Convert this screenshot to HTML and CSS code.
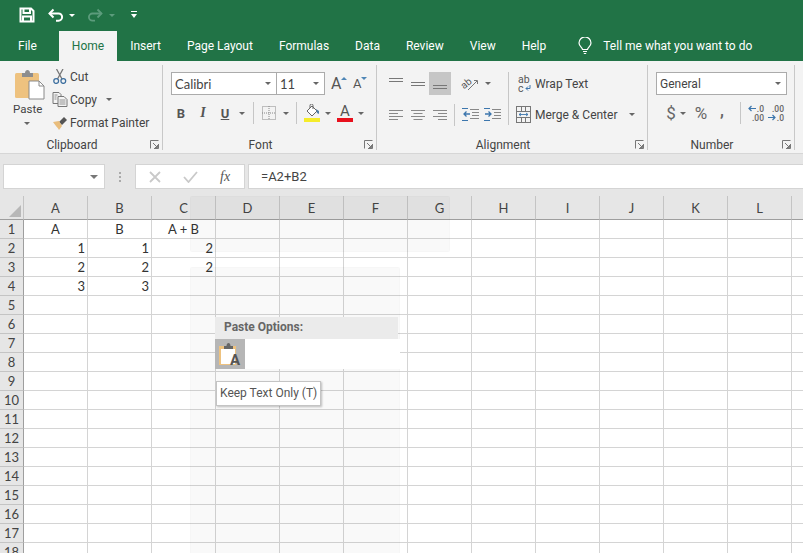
FILE: index.html
```html
<!DOCTYPE html>
<html lang="en">
<head>
<meta charset="utf-8">
<title>Excel</title>
<link rel="stylesheet" href="styles.css">
</head>
<body>
<header class="titlebar">
  <svg class="qa qa-save" width="16" height="16" viewBox="0 0 16 16" fill="none" stroke="#fff" stroke-width="2"><path d="M1.500 1.500h10.500l2.500 2.500v10.500h-13z"/><path d="M4.500 2v4h6.500V2M4 14.500V9.500h8v5"/></svg>
  <svg class="qa qa-undo" width="16" height="14" viewBox="0 0 16 14" fill="none" stroke="#fff" stroke-width="2"><path d="M1.500 5.500h9a3.600 3.600 0 0 1 0 7.200H8"/><path d="M5.500 1.500L1.500 5.500l4 4"/></svg>
  <span class="caret caret-white qa-c1"></span>
  <svg class="qa qa-redo" width="16" height="14" viewBox="0 0 16 14" fill="none" stroke="#5c9c7c" stroke-width="1.800"><path d="M14.500 5.500h-9a3.600 3.600 0 0 0 0 7.200H8"/><path d="M10.500 1.500l4 4-4 4"/></svg>
  <span class="caret caret-dim qa-c2"></span>
  <svg class="qa qa-more" width="8" height="8" viewBox="0 0 8 8" fill="#fff"><rect x="1" y="0" width="6" height="1"/><path d="M1 3h6L4 7z"/></svg>
</header>

<nav class="tabs">
  <span class="tab tab-file">File</span>
  <span class="tab tab-active">Home</span>
  <span class="tab">Insert</span>
  <span class="tab">Page Layout</span>
  <span class="tab">Formulas</span>
  <span class="tab">Data</span>
  <span class="tab">Review</span>
  <span class="tab">View</span>
  <span class="tab">Help</span>
  <svg class="bulb" width="14" height="18" viewBox="0 0 14 18" fill="none" stroke="#fff" stroke-width="1.200"><path d="M4.500 12.500c0-2-3.500-3.200-3.500-6.500a6 6 0 0 1 12 0c0 3.300-3.500 4.500-3.500 6.500z"/><path d="M5 14.500h4M5.800 16.500h2.400"/></svg>
  <span class="tell">Tell me what you want to do</span>
</nav>

<section class="ribbon">
  <div class="group g-clip">
    <div class="group-body clip-body">
      <div class="paste">
        <svg width="30" height="31" viewBox="0 0 30 31"><rect x="0" y="4" width="24" height="25" rx="1.500" fill="#eec27f"/><path d="M7 4h3c0-4 5-4 5 0h3v4H7z" fill="#8d8d8d"/><path d="M14 12h10l5 5v13H14z" fill="#fff" stroke="#8a8a8a"/><path d="M24 12v5h5" fill="none" stroke="#8a8a8a"/></svg>
        <span class="paste-label">Paste</span>
        <span class="caret"></span>
      </div>
      <div class="clip-list">
        <div class="clip-row">
          <svg class="clip-icon" width="15" height="15" viewBox="0 0 15 15" fill="none"><path d="M4 0l5.500 10M10.500 0L5 10" stroke="#777" stroke-width="1.300"/><circle cx="3.700" cy="12" r="2.400" stroke="#3d6f9f" stroke-width="1.300"/><circle cx="10.800" cy="12" r="2.400" stroke="#3d6f9f" stroke-width="1.300"/></svg>
          <span>Cut</span>
        </div>
        <div class="clip-row">
          <svg class="clip-icon" width="15" height="15" viewBox="0 0 15 15" fill="#f3f3f3" stroke="#777"><path d="M.5.500h6l2 2v9h-8z"/><path d="M5.500 4.500h6l3 3v7h-9z"/><path d="M7 8h6M7 10h6M7 12h6M2 3h3M2 5h2M2 7h2" stroke-width=".8"/></svg>
          <span>Copy</span>
          <span class="caret copy-caret"></span>
        </div>
        <div class="clip-row">
          <svg class="clip-icon" width="16" height="15" viewBox="0 0 16 15"><path d="M7 7L12 2l3 3-5 5z" fill="#555"/><path d="M1 7l6-1 3 5-3 4c-1-2-4-5-6-8z" fill="#e9bd7c"/></svg>
          <span>Format Painter</span>
        </div>
      </div>
    </div>
    <div class="group-foot"><span class="foot-label">Clipboard</span><svg class="launch" width="9" height="9" viewBox="0 0 9 9" fill="none" stroke="#777"><path d="M.5 8.500v-8h8M8.500 4v4.500H4M3 3l4.500 4.500M5 7.500h2.500V5"/></svg></div>
  </div>

  <div class="group g-font">
    <div class="group-body font-body">
      <div class="row-top">
        <div class="select font-name"><span>Calibri</span><span class="caret"></span></div>
        <div class="select font-size"><span>11</span><span class="caret"></span></div>
        <span class="size-btn size-grow"><span class="a-big">A</span><svg width="6" height="3" viewBox="0 0 6 3"><path d="M0 3l3-3 3 3z" fill="#4f86b6"/></svg></span>
        <span class="size-btn size-shrink"><span class="a-small">A</span><svg width="6" height="3" viewBox="0 0 6 3"><path d="M0 0h6L3 3z" fill="#4f86b6"/></svg></span>
      </div>
      <div class="row-bottom">
        <span class="fmt fmt-b">B</span>
        <span class="fmt fmt-i">I</span>
        <span class="fmt fmt-u">U</span>
        <span class="caret-box"><span class="caret"></span></span>
        <span class="sep sep-f1"></span>
        <svg class="border-ic" width="14" height="14" viewBox="0 0 14 14" fill="none" stroke="#888" stroke-dasharray="1 1"><rect x=".5" y=".5" width="13" height="13"/><path d="M7 0v14M0 7h14"/></svg>
        <span class="caret-box cb-border"><span class="caret"></span></span>
        <span class="sep sep-f2"></span>
        <svg class="fill-ic" width="17" height="18" viewBox="0 0 17 18"><path d="M8 2l5 5-5 5-5-5z" fill="#fff" stroke="#666"/><path d="M6 4V1.500a1.500 1.500 0 0 1 3 0V5" fill="none" stroke="#666"/><path d="M12 5l3 2v3l-2-1z" fill="#4f7fa8"/><rect y="14" width="16" height="4" fill="#f5ec2a"/></svg>
        <span class="caret-box cb-fill"><span class="caret"></span></span>
        <span class="color-ic"><span class="color-a">A</span><span class="color-bar"></span></span>
        <span class="caret-box cb-color"><span class="caret"></span></span>
      </div>
    </div>
    <div class="group-foot"><span class="foot-label">Font</span><svg class="launch" width="9" height="9" viewBox="0 0 9 9" fill="none" stroke="#777"><path d="M.5 8.500v-8h8M8.500 4v4.500H4M3 3l4.500 4.500M5 7.500h2.500V5"/></svg></div>
  </div>

  <div class="group g-align">
    <div class="group-body align-body">
      <div class="align-left">
        <div class="align-row">
          <span class="ab"><svg width="16" height="14" viewBox="0 0 16 14" stroke="#777"><path d="M1 1.500h14M1 4.500h14"/></svg></span>
          <span class="ab"><svg width="16" height="14" viewBox="0 0 16 14" stroke="#777"><path d="M1 5.500h14M1 8.500h14"/></svg></span>
          <span class="ab ab-on"><svg width="16" height="14" viewBox="0 0 16 14" stroke="#777"><path d="M1 8.500h14M1 11.500h14"/></svg></span>
          <span class="ab orient"><span class="orient-ab">ab</span><svg class="orient-arrow" width="12" height="12" viewBox="0 0 12 12"><path d="M1 11L10 2M7 1.500h3.500V5" fill="none" stroke="#777"/></svg></span>
          <span class="caret-box"><span class="caret"></span></span>
        </div>
        <div class="align-row">
          <span class="ab"><svg width="16" height="12" viewBox="0 0 16 12" stroke="#888"><path d="M1 1.500h14M1 4.500h9M1 7.500h14M1 10.500h9"/></svg></span>
          <span class="ab"><svg width="16" height="12" viewBox="0 0 16 12" stroke="#888"><path d="M1 1.500h14M3.500 4.500h9M1 7.500h14M3.500 10.500h9"/></svg></span>
          <span class="ab"><svg width="16" height="12" viewBox="0 0 16 12" stroke="#888"><path d="M1 1.500h14M6 4.500h9M1 7.500h14M6 10.500h9"/></svg></span>
          <span class="sep sep-a"></span>
          <span class="ab"><svg width="17" height="13" viewBox="0 0 17 13" fill="none"><path d="M8 1.500h9M10 4.500h7M10 7.500h7M8 10.500h9" stroke="#888"/><path d="M8 6H2M4.500 3.500L2 6l2.500 2.500" stroke="#3c76ad" stroke-width="1.300"/><path d="M0 .5h6M0 12.500h6" stroke="#3c76ad"/></svg></span>
          <span class="ab"><svg width="17" height="13" viewBox="0 0 17 13" fill="none"><path d="M8 1.500h9M10 4.500h7M10 7.500h7M8 10.500h9" stroke="#888"/><path d="M1 6h6M4.500 3.500L7 6 4.500 8.500" stroke="#3c76ad" stroke-width="1.300"/><path d="M0 .5h6M0 12.500h6" stroke="#3c76ad"/></svg></span>
        </div>
      </div>
      <div class="align-right">
        <div class="wrap-row">
          <span class="wrap-ic"><span class="wrap-ab">ab</span><span class="wrap-c">c<svg width="6" height="6" viewBox="0 0 6 6" fill="none" stroke="#3c76ad"><path d="M5 0v3.500H1M3 1.500L1 3.500l2 2"/></svg></span></span>
          <span>Wrap Text</span>
        </div>
        <div class="merge-row">
          <svg width="15" height="17" viewBox="0 0 15 17" fill="none" stroke="#777"><rect x=".5" y=".5" width="14" height="16"/><path d="M0 5.500h15M0 11.500h15M5.500 0v5.500M9.500 0v5.500M5.500 11.500v5.500M9.500 11.500v5.500"/><path d="M3 8.500h9M5 7l-2 1.500L5 10M10 7l2 1.500L10 10" stroke="#3c76ad" stroke-width=".9"/></svg>
          <span>Merge &amp; Center</span>
          <span class="caret merge-caret"></span>
        </div>
      </div>
    </div>
    <div class="group-foot"><span class="foot-label">Alignment</span><svg class="launch" width="9" height="9" viewBox="0 0 9 9" fill="none" stroke="#777"><path d="M.5 8.500v-8h8M8.500 4v4.500H4M3 3l4.500 4.500M5 7.500h2.500V5"/></svg></div>
  </div>

  <div class="group g-num">
    <div class="group-body num-body">
      <div class="select num-select"><span>General</span><span class="caret"></span></div>
      <div class="num-row">
        <span class="num-sym num-dollar">$</span>
        <span class="caret-box"><span class="caret"></span></span>
        <span class="num-sym num-pct">%</span>
        <span class="num-sym num-comma">,</span>
        <span class="sep sep-n"></span>
        <span class="dec"><span class="dec-line"><svg class="arr" width="8" height="7" viewBox="0 0 8 7" fill="none" stroke="#3c76ad" stroke-width="1.200"><path d="M8 3.500H1M3.500 1L1 3.500 3.500 6"/></svg>.0</span><span class="dec-line">.00</span></span>
        <span class="dec"><span class="dec-line">.00</span><span class="dec-line"><svg class="arr" width="8" height="7" viewBox="0 0 8 7" fill="none" stroke="#3c76ad" stroke-width="1.200"><path d="M0 3.500h7M4.500 1L7 3.500 4.500 6"/></svg>.0</span></span>
      </div>
    </div>
    <div class="group-foot"><span class="foot-label">Number</span><svg class="launch" width="9" height="9" viewBox="0 0 9 9" fill="none" stroke="#777"><path d="M.5 8.500v-8h8M8.500 4v4.500H4M3 3l4.500 4.500M5 7.500h2.500V5"/></svg></div>
  </div>
</section>

<section class="formula">
  <div class="namebox"><span class="caret"></span></div>
  <span class="dots"></span>
  <div class="fx-box">
    <svg width="14" height="12" viewBox="0 0 14 12" fill="none" stroke="#c9c9c9" stroke-width="1.800"><path d="M2 1l10 10M12 1L2 11"/></svg>
    <svg width="15" height="12" viewBox="0 0 15 12" fill="none" stroke="#c9c9c9" stroke-width="1.800"><path d="M1 6l4.500 5L14 1"/></svg>
    <span class="fx">fx</span>
  </div>
  <div class="fx-input">=A2+B2</div>
</section>

<section class="sheet">
  <table class="grid">
    <thead>
      <tr><th class="corner"><span class="corner-tri"></span></th><th>A</th><th>B</th><th>C</th><th>D</th><th>E</th><th>F</th><th>G</th><th>H</th><th>I</th><th>J</th><th>K</th><th>L</th><th></th></tr>
    </thead>
    <tbody>
      <tr><th>1</th><td class="c">A</td><td class="c">B</td><td class="c">A + B</td><td></td><td></td><td></td><td></td><td></td><td></td><td></td><td></td><td></td><td></td></tr>
      <tr><th>2</th><td>1</td><td>1</td><td>2</td><td></td><td></td><td></td><td></td><td></td><td></td><td></td><td></td><td></td><td></td></tr>
      <tr><th>3</th><td>2</td><td>2</td><td>2</td><td></td><td></td><td></td><td></td><td></td><td></td><td></td><td></td><td></td><td></td></tr>
      <tr><th>4</th><td>3</td><td>3</td><td></td><td></td><td></td><td></td><td></td><td></td><td></td><td></td><td></td><td></td><td></td></tr>
      <tr><th>5</th><td></td><td></td><td></td><td></td><td></td><td></td><td></td><td></td><td></td><td></td><td></td><td></td><td></td></tr>
      <tr><th>6</th><td></td><td></td><td></td><td></td><td></td><td></td><td></td><td></td><td></td><td></td><td></td><td></td><td></td></tr>
      <tr><th>7</th><td></td><td></td><td></td><td></td><td></td><td></td><td></td><td></td><td></td><td></td><td></td><td></td><td></td></tr>
      <tr><th>8</th><td></td><td></td><td></td><td></td><td></td><td></td><td></td><td></td><td></td><td></td><td></td><td></td><td></td></tr>
      <tr><th>9</th><td></td><td></td><td></td><td></td><td></td><td></td><td></td><td></td><td></td><td></td><td></td><td></td><td></td></tr>
      <tr><th>10</th><td></td><td></td><td></td><td></td><td></td><td></td><td></td><td></td><td></td><td></td><td></td><td></td><td></td></tr>
      <tr><th>11</th><td></td><td></td><td></td><td></td><td></td><td></td><td></td><td></td><td></td><td></td><td></td><td></td><td></td></tr>
      <tr><th>12</th><td></td><td></td><td></td><td></td><td></td><td></td><td></td><td></td><td></td><td></td><td></td><td></td><td></td></tr>
      <tr><th>13</th><td></td><td></td><td></td><td></td><td></td><td></td><td></td><td></td><td></td><td></td><td></td><td></td><td></td></tr>
      <tr><th>14</th><td></td><td></td><td></td><td></td><td></td><td></td><td></td><td></td><td></td><td></td><td></td><td></td><td></td></tr>
      <tr><th>15</th><td></td><td></td><td></td><td></td><td></td><td></td><td></td><td></td><td></td><td></td><td></td><td></td><td></td></tr>
      <tr><th>16</th><td></td><td></td><td></td><td></td><td></td><td></td><td></td><td></td><td></td><td></td><td></td><td></td><td></td></tr>
      <tr><th>17</th><td></td><td></td><td></td><td></td><td></td><td></td><td></td><td></td><td></td><td></td><td></td><td></td><td></td></tr>
      <tr><th>18</th><td></td><td></td><td></td><td></td><td></td><td></td><td></td><td></td><td></td><td></td><td></td><td></td><td></td></tr>
    </tbody>
  </table>
  <div class="ghost ghost-top"></div>
  <div class="ghost ghost-main"></div>
  <div class="paste-menu">
    <div class="menu-head">Paste Options:</div>
    <div class="menu-body">
      <span class="menu-btn">
        <svg width="18" height="24" viewBox="0 0 18 24"><rect x="0" y="4" width="17" height="19" fill="#eec27f"/><path d="M5 4h2.500c0-4 4-4 4 0H14v3H5z" fill="#666"/><rect x="2" y="7" width="14" height="15" fill="#fff"/></svg>
        <span class="menu-a">A</span>
      </span>
    </div>
  </div>
  <div class="tooltip">Keep Text Only (T)</div>
</section>
</body>
</html>
```
FILE: styles.css
```css
* { box-sizing: border-box; }
html, body { margin: 0; padding: 0; }
body {
  width: 803px; height: 553px; overflow: hidden;
  display: flex; flex-direction: column;
  background: #fff; color: #444;
  font: 12px Roboto, "Noto Sans", sans-serif;
}

/* title bar */
.titlebar { height: 31px; flex: none; background: #217346; display: flex; align-items: center; }
.qa { flex: none; }
.qa-save { margin: -2px 0 0 19px; }
.qa-undo { margin: -2px 0 0 13px; }
.qa-c1 { margin: 0 0 0 5px; }
.qa-redo { margin: -2px 0 0 12px; }
.qa-c2 { margin: 0 0 0 6px; }
.qa-more { margin: -1px 0 0 15px; }

.caret { display: inline-block; width: 0; height: 0; border: 3px solid transparent; border-top: 3px solid #666; border-bottom: 0; flex: none; }
.caret-white { border-top-color: #fff; }
.caret-dim { border-top-color: #5c9c7c; }
.caret-box { display: inline-flex; width: 12px; justify-content: center; align-items: center; flex: none; }

/* tabs */
.tabs { height: 30px; flex: none; background: #217346; color: #fff; display: flex; align-items: center; padding-left: 5px; }
.tab { padding: 0 13px; line-height: 30px; white-space: nowrap; }
.tab-file { padding-right: 22px; }
.tab-active { background: #f3f3f3; color: #217346; padding: 0 13px; }
.bulb { margin-left: 19px; flex: none; }
.tell { margin-left: 11px; white-space: nowrap; }

/* ribbon */
.ribbon { height: 93px; flex: none; background: #f3f3f3; border-bottom: 1px solid #d6d6d6; display: flex; padding: 4px 0 3px; }
.group { flex: none; display: flex; flex-direction: column; border-right: 1px solid #c8c8c8; }
.g-clip { width: 163px; }
.g-font { width: 214px; }
.g-align { width: 271px; }
.g-num { width: 147px; }
.group-body { flex: 1; min-height: 0; }
.group-foot { height: 18px; flex: none; margin-bottom: -3px; padding: 1px 3px 0 0; display: flex; align-items: center; }
.foot-label { flex: 1; text-align: center; padding-right: 6px; }
.launch { flex: none; }

/* clipboard */
.clip-body { display: flex; }
.paste { width: 52px; padding: 4px 0 0 15px; display: flex; flex-direction: column; }
.paste-label { margin: 1px 0 0 -2px; line-height: 17px; font-size: 11.500px; }
.paste .caret { margin: 4px 0 0 9px; }
.clip-list { display: flex; flex-direction: column; }
.clip-row { height: 23px; display: flex; align-items: center; white-space: nowrap; }
.clip-icon { width: 16px; margin-right: 2px; flex: none; }
.copy-caret { margin-left: 9px; }

/* font */
.font-body { padding-top: 7px; }
.row-top, .row-bottom, .align-row, .num-row { display: flex; align-items: center; }
.select { background: #fff; border: 1px solid #ababab; height: 23px; display: flex; align-items: center; justify-content: space-between; padding: 0 5px 0 3px; flex: none; }
.font-name { width: 106px; margin-left: 8px; font-family: Lato, sans-serif; font-size: 13px; }
.font-size { width: 49px; margin-left: -1px; font-family: Lato, sans-serif; font-size: 13px; }
.size-btn { display: flex; align-items: flex-start; flex: none; height: 20px; color: #555; line-height: 20px; }
.size-grow { margin-left: 6px; width: 16px; }
.size-shrink { margin-left: 6px; width: 15px; }
.size-btn svg { margin: 3px 0 0 0; flex: none; }
.a-big { font-size: 16px; }
.a-small { font-size: 13px; }
.row-bottom { margin-top: 7px; height: 22px; padding-left: 7px; }
.fmt { width: 22px; text-align: center; font: bold 13px Roboto, sans-serif; color: #555; flex: none; }
.fmt-i { font-style: italic; font-family: "Liberation Serif", serif; font-size: 14px; }
.fmt-u { text-decoration: underline; }
.sep { width: 1px; height: 22px; background: #c6c6c6; flex: none; display: block; }
.sep-f1 { margin-left: 5px; }
.border-ic { margin-left: 8px; flex: none; }
.cb-border { margin-left: 4px; }
.sep-f2 { margin-left: 4px; }
.fill-ic { margin-left: 7px; flex: none; }
.cb-fill { margin-left: 1px; }
.color-ic { margin-left: 3px; width: 16px; height: 18px; display: flex; flex-direction: column; align-items: center; flex: none; }
.color-a { font-size: 15px; line-height: 14px; color: #555; }
.color-bar { width: 16px; height: 4px; background: #e8101d; flex: none; }
.cb-color { margin-left: 2px; }

/* alignment */
.align-body { display: flex; padding: 7px 0 0 8px; }
.align-left { width: 124px; height: 53px; border-right: 1px solid #c6c6c6; display: flex; flex-direction: column; gap: 8px; }
.align-row { height: 23px; }
.ab { width: 22px; height: 23px; display: inline-flex; align-items: center; justify-content: center; flex: none; }
.ab-on { background: #c6c6c6; }
.orient { margin-left: 9px; position: relative; }
.orient-ab { font-size: 10px; line-height: 10px; transform: rotate(-40deg) translate(-3px, -3px); color: #555; }
.orient-arrow { position: absolute; left: 7px; top: 7px; }
.sep-a { margin: 0 4px 0 3px; }
.align-right { padding-left: 7px; display: flex; flex-direction: column; gap: 8px; }
.wrap-row, .merge-row { height: 23px; display: flex; align-items: center; white-space: nowrap; }
.wrap-ic { width: 14px; margin: 0 3px 0 2px; display: flex; flex-direction: column; font-size: 10.500px; line-height: 9px; color: #555; flex: none; }
.wrap-c { display: flex; align-items: center; gap: 1px; }
.merge-row svg { margin-right: 4px; flex: none; }
.merge-caret { margin-left: 12px; }

/* number */
.num-body { padding-top: 7px; }
.num-select { width: 131px; margin-left: 8px; }
.num-row { margin-top: 7px; height: 22px; padding-left: 16px; }
.num-sym { flex: none; color: #666; }
.num-dollar { font-size: 17px; width: 14px; text-align: center; margin-right: -1px; }
.num-pct { font-size: 17px; margin-left: 2px; width: 20px; text-align: center; }
.num-comma { font-size: 16px; font-weight: 700; margin: -5px 0 0 9px; width: 6px; }
.sep-n { margin-left: 14px; }
.dec { width: 18px; margin-left: 5px; display: flex; flex-direction: column; align-items: flex-end; gap: 1px; color: #666; flex: none; }
.dec + .dec { margin-left: 2px; }
.dec-line { font-size: 8.500px; line-height: 8px; height: 8px; font-weight: 500; white-space: nowrap; display: flex; align-items: center; }
.arr { flex: none; margin-right: 1px; }

/* formula bar */
.formula { height: 42px; flex: none; background: #e6e6e6; display: flex; align-items: flex-start; padding: 10px 0 0 3px; }
.namebox { width: 102px; height: 25px; background: #fff; border: 1px solid #d4d4d4; display: flex; align-items: center; justify-content: flex-end; padding-right: 6px; flex: none; }
.namebox .caret { border-width: 4px 4px 0; border-top-color: #777; }
.dots { width: 2px; height: 10px; margin: 8px 14px 0; flex: none; background: radial-gradient(circle at 1px 1px, #aaa 1px, transparent 1px) 0 0 / 2px 4px; }
.fx-box { width: 110px; height: 25px; background: #fff; border: 1px solid #d4d4d4; display: flex; align-items: center; padding-left: 12px; gap: 21px; flex: none; }
.fx { font: italic 14px "Liberation Serif", serif; color: #555; margin-left: 1px; }
.fx-input { flex: 1; height: 25px; margin-left: 3px; background: #fff; border: 1px solid #d4d4d4; border-right: 0; padding-left: 12px; line-height: 23px; font-size: 13px; color: #444; }

/* sheet */
.sheet { flex: 1; min-height: 0; position: relative; overflow: hidden; background: #fff; }
.grid { border-collapse: separate; border-spacing: 0; table-layout: fixed; width: 856px; font: 13px Lato, sans-serif; color: #333; }
.grid th { font-weight: 400; padding: 0; background: #e6e6e6; color: #444; }
.grid thead th { height: 24px; width: 64px; border-right: 1px solid #c4c4c4; border-bottom: 1px solid #9e9e9e; text-align: center; }
.grid thead th.corner { width: 24px; }
.corner-tri { display: block; width: 0; height: 0; margin: 6px 0 0 9px; border-style: solid; border-width: 0 0 12px 12px; border-color: transparent transparent #b8b8b8 transparent; }
.grid tbody th { width: 24px; border-right: 1px solid #9e9e9e; border-bottom: 1px solid #c4c4c4; text-align: center; }
.grid tbody tr { height: 19px; }
.grid td { height: 19px; padding: 0 2px 0 0; border-right: 1px solid #d4d4d4; border-bottom: 1px solid #d4d4d4; text-align: right; line-height: 18px; overflow: hidden; }
.grid td.c { text-align: center; padding: 0; }

.ghost { position: absolute; left: 190px; background: rgba(0,0,0,.025); border: 1px solid rgba(0,0,0,.015); border-radius: 2px; }
.ghost-top { top: 0; width: 260px; height: 56px; }
.ghost-main { top: 71px; width: 210px; height: 290px; }

.paste-menu { position: absolute; left: 215px; top: 121px; width: 185px; }
.menu-head { width: 183px; height: 22px; background: #ebebeb; padding-left: 9px; line-height: 21px; font-weight: 700; font-size: 12px; color: #666; }
.menu-body { height: 30px; background: #fff; }
.menu-btn { display: flex; align-items: center; width: 30px; height: 30px; padding-left: 4px; background: #b6b6b6; }
.menu-a { font-size: 15px; line-height: 15px; font-weight: 700; color: #555; margin: 12px 0 0 -7px; }
.tooltip { position: absolute; left: 216px; top: 185px; width: 105px; height: 25px; background: #fff; border: 1px solid #c4c4c4; box-shadow: 1px 1px 2px rgba(0,0,0,.25); padding-left: 3px; line-height: 23px; font-size: 12px; color: #555; white-space: nowrap; }
```
